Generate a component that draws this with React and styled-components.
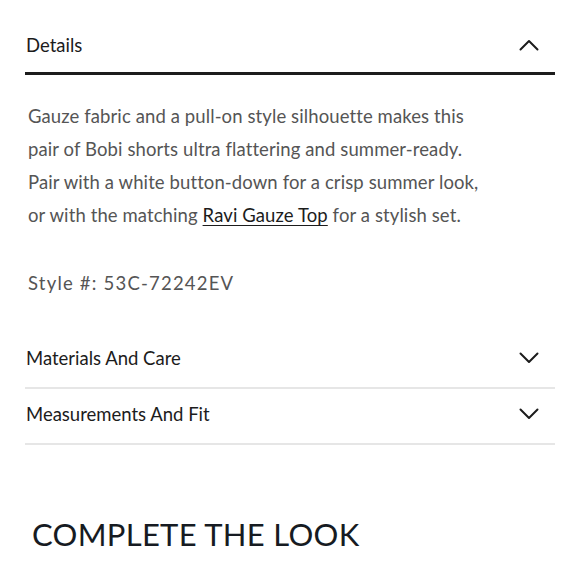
import React from 'react';
import styled, { createGlobalStyle } from 'styled-components';

const GlobalStyle = createGlobalStyle`
  html, body {
    margin: 0;
    padding: 0;
    background: #fff;
  }
  body {
    font-family: Lato, "Open Sans", sans-serif;
    -webkit-font-smoothing: antialiased;
  }
`;

const Page = styled.div`
  width: 580px;
  padding: 0 25px;
  box-sizing: border-box;
`;

const Header = styled.div`
  display: flex;
  align-items: center;
  justify-content: space-between;
  height: ${p => p.$open ? 75 : 56}px;
  padding: ${p => p.$open ? '18px 16px 0 1px' : '0 16px 4px 1px'};
  box-sizing: border-box;
  border-bottom: ${p => p.$open ? '3px solid #1c1c1c' : '2px solid #e6e6e6'};
`;

const Title = styled.span`
  font-size: 18.5px;
  color: #1c1c1c;
`;

const Body = styled.div`
  padding: 25px 0 0 3px;
  color: #555;
  font-size: 18.5px;
  line-height: 33px;
  letter-spacing: 0.1px;
`;

const Para = styled.p`
  margin: 0;
  max-width: 460px;
`;

const Link = styled.a`
  color: #1c1c1c;
  text-decoration: underline;
  text-underline-offset: 3px;
`;

const StyleNo = styled.p`
  margin: 35px 0 0 0;
  letter-spacing: 1.2px;
`;

const Section = styled.div`
  margin-top: 33px;
`;

const Heading = styled.h2`
  margin: 69px 0 0 7px;
  font-size: 31px;
  line-height: 40px;
  font-weight: 400;
  color: #161b22;
  letter-spacing: 0.3px;
`;

const Chevron = ({ up }) => (
  <svg width="20" height="12" viewBox="0 0 20 12" fill="none">
    <path
      d={up ? 'M1.5 10.5 L10 2 L18.5 10.5' : 'M1.5 1.5 L10 10 L18.5 1.5'}
      stroke="#1c1c1c"
      strokeWidth="2"
      strokeLinecap="round"
      strokeLinejoin="round"
    />
  </svg>
);

const Row = ({ title, open }) => (
  <Header $open={open}>
    <Title>{title}</Title>
    <Chevron up={open} />
  </Header>
);

export default function App() {
  return (
    <Page>
      <GlobalStyle />
      <Row title="Details" open />
      <Body>
        <Para>
          Gauze fabric and a pull-on style silhouette makes this pair of Bobi shorts ultra
          flattering and summer-ready. Pair with a white button-down for a crisp summer look,
          or with the matching <Link href="#">Ravi Gauze Top</Link> for a stylish set.
        </Para>
        <StyleNo>Style #: 53C-72242EV</StyleNo>
      </Body>
      <Section>
        <Row title="Materials And Care" />
        <Row title="Measurements And Fit" />
      </Section>
      <Heading>COMPLETE THE LOOK</Heading>
    </Page>
  );
}
